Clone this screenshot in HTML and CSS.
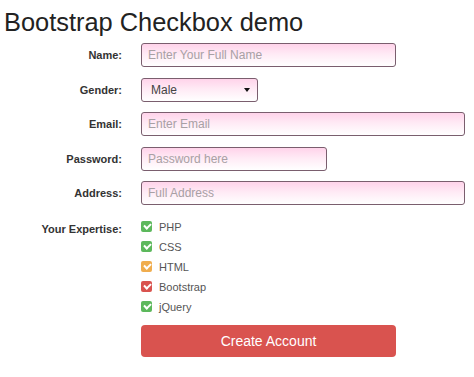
FILE: index.html
```html
<!DOCTYPE html>
<html lang="en">
<head>
    <meta charset="UTF-8">
    <title>Bootstrap Checkbox demo</title>
    <link rel="stylesheet" href="styles.css">
</head>
<body>
    <h1>Bootstrap Checkbox demo</h1>

    <form class="signup">
        <label class="label" for="name">Name:</label>
        <div class="field"><input class="input wide-2" id="name" type="text" placeholder="Enter Your Full Name"></div>

        <label class="label" for="gender">Gender:</label>
        <div class="field">
            <div class="select-wrap">
                <select class="input select" id="gender">
                    <option>Male</option>
                    <option>Female</option>
                </select>
            </div>
        </div>

        <label class="label" for="email">Email:</label>
        <div class="field"><input class="input wide-full" id="email" type="text" placeholder="Enter Email"></div>

        <label class="label" for="password">Password:</label>
        <div class="field"><input class="input wide-1" id="password" type="password" placeholder="Password here"></div>

        <label class="label" for="address">Address:</label>
        <div class="field"><input class="input wide-full" id="address" type="text" placeholder="Full Address"></div>

        <span class="label label-top">Your Expertise:</span>
        <div class="field checks">
            <label class="check"><span class="box green"></span>PHP</label>
            <label class="check"><span class="box green"></span>CSS</label>
            <label class="check"><span class="box orange"></span>HTML</label>
            <label class="check"><span class="box red"></span>Bootstrap</label>
            <label class="check"><span class="box green"></span>jQuery</label>
        </div>

        <span></span>
        <div class="field"><button class="btn" type="button">Create Account</button></div>
    </form>
</body>
</html>
```

FILE: styles.css
```css
body {
    font-family: "Liberation Sans", Arial, sans-serif;
    background-color: #fff;
    color: #333;
    margin: 0;
    padding: 0 0 0 4px;
}
h1 {
    font-size: 25.4px;
    font-weight: normal;
    color: #222;
    margin: 0;
    padding-top: 8px;
    line-height: 28px;
    height: 35px;
}
.signup {
    display: grid;
    grid-template-columns: 118px 1fr;
    column-gap: 19px;
    row-gap: 10.5px;
    width: 460px;
}
.label {
    font-size: 11px;
    font-weight: bold;
    color: #333;
    text-align: right;
    align-self: center;
}
.label-top {
    align-self: start;
    padding-top: 7px;
}
.field {
    display: flex;
}
.input {
    box-sizing: border-box;
    height: 24px;
    border: 1px solid #7a5e6e;
    border-radius: 3px;
    background: linear-gradient(to bottom, #ffd3ea 0%, #ffeaf5 45%, #fff 100%);
    font-family: "Liberation Sans", Arial, sans-serif;
    font-size: 12px;
    color: #555;
    padding: 0 6px;
    outline: none;
}
.input::placeholder {
    color: #a8a0a4;
}
.wide-1 { width: 186px; }
.wide-2 { width: 255px; }
.wide-full { width: 324px; }
.select-wrap {
    position: relative;
}
.select {
    appearance: none;
    -webkit-appearance: none;
    width: 117px;
    padding-left: 9px;
    color: #444;
}
.select-wrap::after {
    content: "";
    position: absolute;
    right: 8px;
    top: 10px;
    border-left: 3px solid transparent;
    border-right: 3px solid transparent;
    border-top: 4px solid #111;
}
.checks {
    flex-direction: column;
    padding-top: 1px;
}
.check {
    display: flex;
    align-items: center;
    height: 20px;
    font-size: 11px;
    color: #555;
}
.box {
    position: relative;
    width: 11px;
    height: 11px;
    border-radius: 2px;
    margin-right: 7px;
}
.box::after {
    content: "";
    position: absolute;
    left: 3px;
    top: 2px;
    width: 5px;
    height: 3px;
    border-left: 2px solid #fff;
    border-bottom: 2px solid #fff;
    transform: rotate(-45deg);
}
.green { background-color: #5cb85c; }
.orange { background-color: #f0ad4e; }
.red { background-color: #d9534f; }
.btn {
    width: 255px;
    height: 32px;
    margin-top: -2px;
    border: 0;
    border-radius: 4px;
    background-color: #d9534f;
    color: #fff;
    font-family: "Liberation Sans", Arial, sans-serif;
    font-size: 14px;
}
```
